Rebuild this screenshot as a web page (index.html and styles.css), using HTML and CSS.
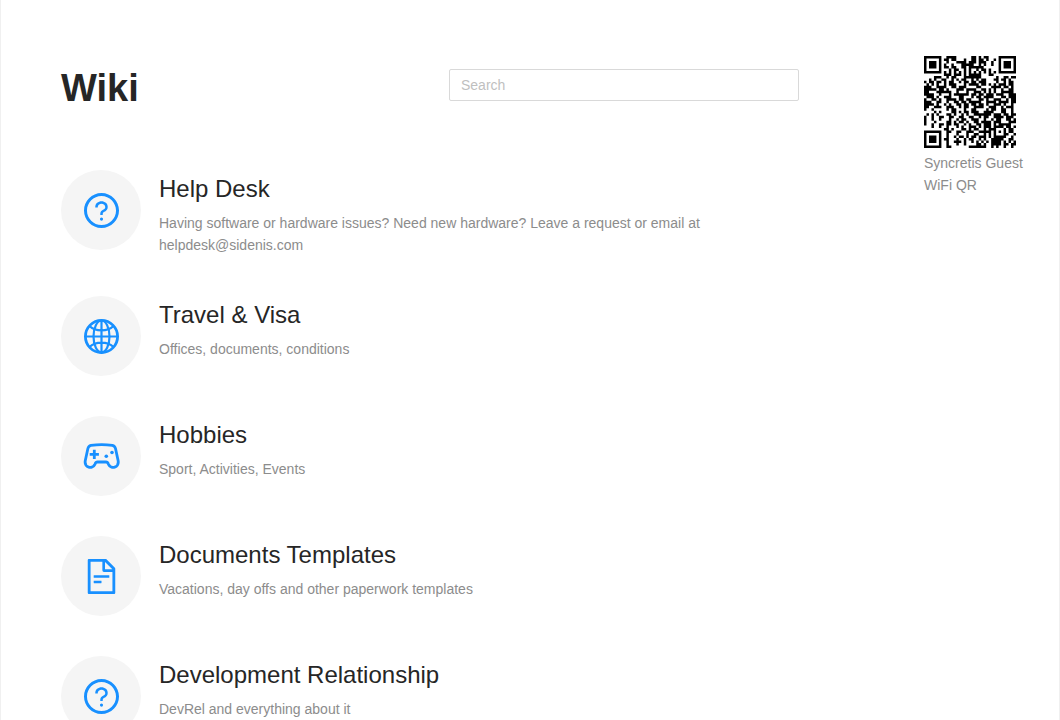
FILE: index.html
```
<!DOCTYPE html>
<html lang="en">
<head>
<meta charset="utf-8">
<meta name="viewport" content="width=device-width, initial-scale=1">
<title>Wiki</title>
<link rel="stylesheet" href="styles.css">
</head>
<body>
<svg class="sprite" aria-hidden="true">
  <symbol id="icon-question" viewBox="64 64 896 896">
    <path d="M512 64C264.6 64 64 264.6 64 512s200.6 448 448 448 448-200.6 448-448S759.4 64 512 64zm0 820c-205.4 0-372-166.6-372-372s166.6-372 372-372 372 166.6 372 372-166.6 372-372 372z"/>
    <path d="M623.6 316.7C593.6 290.4 554 276 512 276s-81.6 14.5-111.6 40.7C369.2 344 352 380.7 352 420v7.6c0 4.4 3.6 8 8 8h48c4.4 0 8-3.6 8-8V420c0-44.1 43.1-80 96-80s96 35.9 96 80c0 31.1-22 59.6-56.1 72.7-21.2 8.1-39.2 22.3-52.1 40.9-13.1 19-19.9 41.8-19.9 64.9V620c0 4.4 3.6 8 8 8h48c4.4 0 8-3.6 8-8v-22.7a48.3 48.3 0 0130.9-44.8c59-22.7 97.1-74.7 97.1-132.5.1-39.3-17.1-76-48.3-103.3zM472 732a40 40 0 1080 0 40 40 0 10-80 0z"/>
  </symbol>
  <symbol id="icon-globe" viewBox="0 0 35 35">
    <g fill="none" stroke="currentColor" stroke-width="2.2">
      <circle cx="17.5" cy="17.5" r="16.1" stroke-width="2.8"/>
      <ellipse cx="17.5" cy="17.5" rx="8" ry="16"/>
      <path d="M17.5 1v33M1 17.5h33M5.5 7c3 3 7.2 4.4 12 4.4S26.5 10 29.5 7M5.5 28c3-3 7.2-4.4 12-4.4s9 1.4 12 4.4"/>
    </g>
  </symbol>
  <symbol id="icon-gamepad" viewBox="0 0 38 38">
    <path fill="none" stroke="currentColor" stroke-width="2.8" stroke-linejoin="round" d="M9 8.400Q19.700 6.800 30.400 8.400Q32.900 9 33.500 11.500L36.100 23.500C37.400 30.800 29 32.600 26.500 27.300Q25.600 25 24 25H15.400Q13.800 25 12.900 27.300C10.400 32.600 2 30.800 3.300 23.500L5.900 11.500Q6.500 9 9 8.400Z"/>
    <path d="M10.900 12.700h2.800v3.200h3.200v2.800h-3.200v3.200h-2.800v-3.200H7.700v-2.800h3.200z"/>
    <circle cx="24.300" cy="19.300" r="1.800"/>
    <circle cx="30" cy="15.500" r="1.800"/>
  </symbol>
  <symbol id="icon-document" viewBox="64 64 896 896">
    <path d="M854.6 288.6L639.4 73.4c-6-6-14.1-9.4-22.6-9.4H192c-17.7 0-32 14.3-32 32v832c0 17.7 14.3 32 32 32h640c17.7 0 32-14.3 32-32V311.3c0-8.5-3.4-16.7-9.4-22.7zM790.2 326H602V137.8L790.2 326zm1.8 562H232V136h302v216a42 42 0 0042 42h216v494z"/>
    <path d="M504 618H320c-4.4 0-8 3.6-8 8v48c0 4.4 3.6 8 8 8h184c4.4 0 8-3.6 8-8v-48c0-4.4-3.6-8-8-8zM312 490v48c0 4.4 3.6 8 8 8h384c4.4 0 8-3.6 8-8v-48c0-4.4-3.6-8-8-8H320c-4.4 0-8 3.6-8 8z"/>
  </symbol>
</svg>
<div class="page">
  <main class="main">
    <header class="header">
      <h1 class="page-title">Wiki</h1>
      <input class="search" type="search" placeholder="Search" aria-label="Search">
    </header>
    <ul class="sections">
      <li class="section">
        <span class="badge"><svg class="icon" aria-hidden="true"><use href="#icon-question"/></svg></span>
        <div class="section-text">
          <h2 class="section-title">Help Desk</h2>
          <p class="description">Having software or hardware issues? Need new hardware? Leave a request or email at helpdesk@sidenis.com</p>
        </div>
      </li>
      <li class="section">
        <span class="badge"><svg class="icon" aria-hidden="true"><use href="#icon-globe"/></svg></span>
        <div class="section-text">
          <h2 class="section-title">Travel &amp; Visa</h2>
          <p class="description">Offices, documents, conditions</p>
        </div>
      </li>
      <li class="section">
        <span class="badge"><svg class="icon icon-wide" aria-hidden="true"><use href="#icon-gamepad"/></svg></span>
        <div class="section-text">
          <h2 class="section-title">Hobbies</h2>
          <p class="description">Sport, Activities, Events</p>
        </div>
      </li>
      <li class="section">
        <span class="badge"><svg class="icon" aria-hidden="true"><use href="#icon-document"/></svg></span>
        <div class="section-text">
          <h2 class="section-title">Documents Templates</h2>
          <p class="description">Vacations, day offs and other paperwork templates</p>
        </div>
      </li>
      <li class="section">
        <span class="badge"><svg class="icon" aria-hidden="true"><use href="#icon-question"/></svg></span>
        <div class="section-text">
          <h2 class="section-title">Development Relationship</h2>
          <p class="description">DevRel and everything about it</p>
        </div>
      </li>
    </ul>
  </main>
  <aside class="wifi">
    <svg class="qr" viewBox="0 0 37 37" role="img" aria-label="Guest WiFi QR code"><path id="qr-modules"/></svg>
    <p class="description">Syncretis Guest WiFi QR</p>
  </aside>
</div>
<script src="qr.js"></script>
</body>
</html>
```
FILE: styles.css
```
* {
  box-sizing: border-box;
}

body {
  margin: 0;
  background: #fff;
  color: #262626;
  font-family: "Liberation Sans", Arial, sans-serif;
  font-size: 14px;
  line-height: 22px;
}

h1, h2, p, ul {
  margin: 0;
  padding: 0;
}

.sprite {
  position: absolute;
  width: 0;
  height: 0;
}

.page {
  display: flex;
  justify-content: space-between;
  align-items: flex-start;
  gap: 40px;
  min-height: 100vh;
  padding: 56px 35px 40px 60px;
  border: solid #f0f0f0;
  border-width: 0 1px;
}

.main {
  flex: 1;
  max-width: 738px;
}

.header {
  display: flex;
  justify-content: space-between;
  align-items: flex-start;
  padding-top: 8px;
  margin-bottom: 58px;
}

.page-title {
  font-size: 38px;
  line-height: 48px;
}

.search {
  width: 350px;
  height: 32px;
  margin-top: 5px;
  padding: 4px 11px;
  border: 1px solid #d9d9d9;
  border-radius: 2px;
  background: #fff;
  color: #262626;
  font: inherit;
  appearance: none;
}

.search::placeholder {
  color: #bfbfbf;
}

.sections {
  display: grid;
  gap: 40px;
  list-style: none;
}

.section {
  display: flex;
  align-items: flex-start;
  gap: 18px;
}

.badge {
  display: flex;
  flex: none;
  justify-content: center;
  align-items: center;
  width: 80px;
  height: 80px;
  border-radius: 50%;
  background: #f5f5f5;
}

.icon {
  width: 35px;
  height: 35px;
  color: #1890ff;
  fill: currentColor;
}

.icon-wide {
  width: 38px;
  height: 38px;
}

.section-title {
  margin-bottom: 4px;
  font-size: 24px;
  font-weight: 400;
  line-height: 38px;
}

.description {
  color: #8c8c8c;
}

.wifi {
  flex: none;
  width: 100px;
}

.qr {
  display: block;
  width: 92px;
  height: 92px;
  margin-bottom: 4px;
}
```
FILE: qr.js
```
// One string per row of modules; "#" is a dark module.
const rows = [
  "#######..####......##.#.##....#######",
  "#.....#.##.##...#..##.##.#..#.#.....#",
  "#.###.#..#...####.###.###..#..#.###.#",
  "#.###.#.#..#...#####..#.#..#..#.###.#",
  "#.###.#.##.##..##.######......#.###.#",
  "#.....#...#.##..#.#..#.##.#...#.....#",
  "#######.#.#.#.#.#.#.#.#.#.#.#.#######",
  "........###.###.#.#####...##.........",
  "....###..#.##...#######......#..##.##",
  "..#.#..##..#.#.##..#.#.##...##.##.#..",
  "#.##.##.#.##..#.##.##.###....#..#.##.",
  ".#.#.#..#.###...#.####.##.#.#.###.##.",
  "###..####..##.###....##....####.##.#.",
  "#####.##.#...###.####..##.#.#..#..##.",
  "##...######..#...#..###.#.#.#..#####.",
  "####..#...#.######.##.##.###.###..###",
  ".###.#..###...##...#.##.####...##.###",
  "#..##.#..####.##.##...##.#..###..#.##",
  "###..##..#..##.##.#####..####.####.##",
  "####.#..#.#..##.##.##.##.#..###.#..#.",
  "##..###..###..#.##..####..###..#.###.",
  "#..#.....#.##...#..##....#.##..##..#.",
  "....#.#....##.#.##.###..####...##..#.",
  ".#.#.#...##.#..#.#..#######.###.##.##",
  "#..#..##..##..##..##..#.##..####.###.",
  "#..#..#...#..#.##..###..#..#.##..##.#",
  "#...#....##.#.##.#..##.####.###...###",
  "#..#..##.##.##..#.#..##.###.#.#####..",
  "...#..#..#...#.#..###.#.###.####.##.#",
  "........##.#...##.#.##..#.###...#.##.",
  "#######..##..##..###..#####.#.#.#.##.",
  "#.....#..#...#...#..##..#.#.#...##..#",
  "#.###.#..#..#.##.#.##.###.#.#####..#.",
  "#.###.#.##...#..#.##..#.#..#####..##.",
  "#.###.#..#..###.#..#.#.#.#.####.#.#.#",
  "#.....#..#...#..#....##.#..####.##.##",
  "#######..##.......#######..#.#..#..#."
];

const path = rows
  .map((row, y) => [...row]
    .map((cell, x) => (cell === "#" ? `M${x} ${y}h1v1h-1z` : ""))
    .join(""))
  .join("");

document.getElementById("qr-modules").setAttribute("d", path);
```
